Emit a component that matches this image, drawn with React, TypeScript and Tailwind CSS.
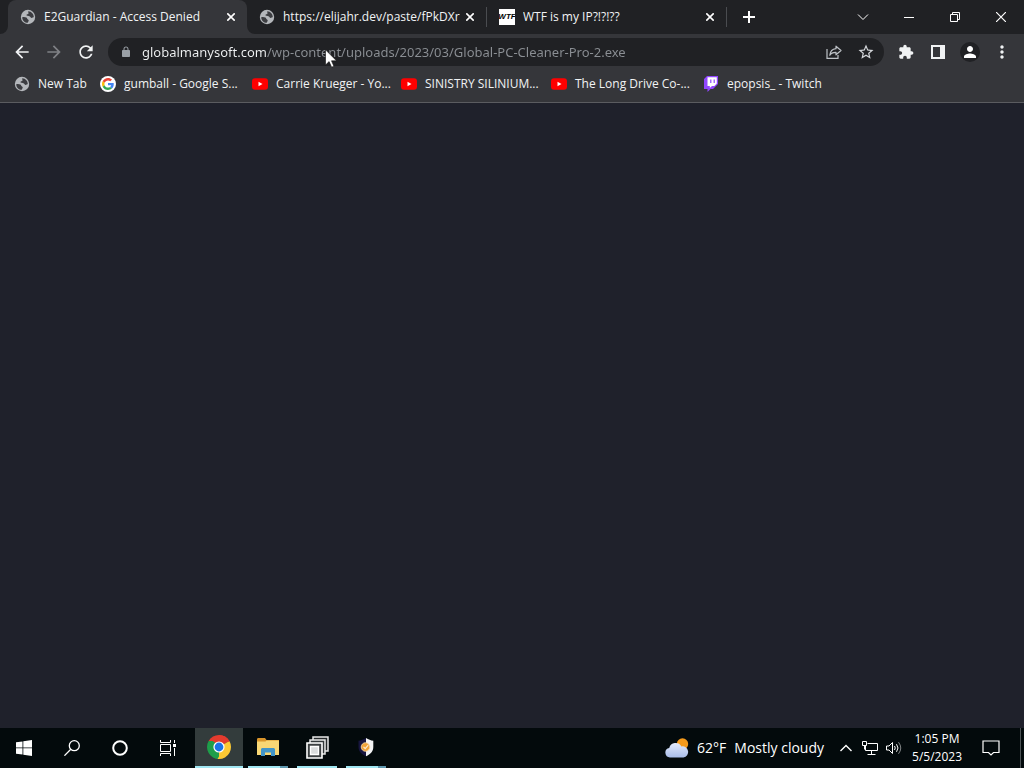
import React from "react";

type IconProps = { className?: string };

const PATHS = {
  back: "M20 11H7.83l5.59-5.59L12 4l-8 8 8 8 1.41-1.41L7.83 13H20v-2z",
  forward: "M12 4l-1.41 1.41L16.17 11H4v2h12.17l-5.58 5.59L12 20l8-8z",
  reload:
    "M17.65 6.35C16.2 4.9 14.21 4 12 4c-4.42 0-7.99 3.58-7.99 8s3.57 8 7.99 8c3.73 0 6.84-2.55 7.73-6h-2.08c-.82 2.33-3.04 4-5.65 4-3.31 0-6-2.69-6-6s2.69-6 6-6c1.66 0 3.14.69 4.22 1.78L13 11h7V4l-2.35 2.35z",
  lock: "M18 8h-1V6c0-2.76-2.24-5-5-5S7 3.24 7 6v2H6c-1.1 0-2 .9-2 2v10c0 1.1.9 2 2 2h12c1.1 0 2-.9 2-2V10c0-1.1-.9-2-2-2zM9 6c0-1.66 1.34-3 3-3s3 1.34 3 3v2H9V6z",
  star: "M22 9.24l-7.19-.62L12 2 9.19 8.63 2 9.24l5.46 4.73L5.82 21 12 17.27 18.18 21l-1.63-7.03L22 9.24zM12 15.4l-3.76 2.27 1-4.28-3.32-2.88 4.38-.38L12 6.1l1.71 4.04 4.38.38-3.32 2.88 1 4.28L12 15.4z",
  puzzle:
    "M20.5 11H19V7c0-1.1-.9-2-2-2h-4V3.5C13 2.12 11.88 1 10.5 1S8 2.12 8 3.5V5H4c-1.1 0-1.99.9-1.99 2v3.8H3.5c1.49 0 2.7 1.21 2.7 2.7s-1.21 2.7-2.7 2.7H2V20c0 1.1.9 2 2 2h3.8v-1.5c0-1.49 1.21-2.7 2.7-2.7 1.49 0 2.7 1.21 2.7 2.7V22H17c1.1 0 2-.9 2-2v-4h1.5c1.38 0 2.5-1.12 2.5-2.5S21.88 11 20.5 11z",
  person:
    "M12 12c2.21 0 4-1.79 4-4s-1.79-4-4-4-4 1.79-4 4 1.79 4 4 4zm0 2c-2.67 0-8 1.34-8 4v2h16v-2c0-2.66-5.33-4-8-4z",
  dots: "M12 8c1.1 0 2-.9 2-2s-.9-2-2-2-2 .9-2 2 .9 2 2 2zm0 2c-1.1 0-2 .9-2 2s.9 2 2 2 2-.9 2-2-.9-2-2-2zm0 6c-1.1 0-2 .9-2 2s.9 2 2 2 2-.9 2-2-.9-2-2-2z",
};

function Solid({ d, className = "size-5" }: IconProps & { d: string }) {
  return (
    <svg viewBox="0 0 24 24" fill="currentColor" className={`shrink-0 ${className}`} aria-hidden="true">
      <path d={d} />
    </svg>
  );
}

function GlobeIcon() {
  return (
    <svg viewBox="0 0 16 16" className="size-4 shrink-0" aria-hidden="true">
      <circle cx="8" cy="8" r="7.2" fill="#b4b7bb" />
      <path
        d="M2.2 8.2c1.6-.3 3.2-.2 4.2.4 1.1.7.4 1.5 1.6 1.9 1 .4.9 1.5.2 2.200l-.5 1.100C4.700 13.700 2.300 11.400 2.200 8.200zM8.300 2.200c-.5 1.200.6 1.400.2 2.300-.4.9-2 .5-2 1.500 0 1.200 2 .9 3 1.200 1.200.3 1 1.700 2.200 1.700.9 0 1.300-.7 2.100-.6.1-3.300-2.200-5.800-5.500-6.100z"
        fill="#3c3d41"
      />
    </svg>
  );
}

function GoogleIcon() {
  return (
    <svg viewBox="0 0 16 16" className="size-4 shrink-0" aria-hidden="true">
      <circle cx="8" cy="8" r="8" fill="#fff" />
      <g transform="translate(2 2) scale(.25)">
        <path fill="#EA4335" d="M24 9.500c3.540 0 6.710 1.220 9.210 3.600l6.850-6.850C35.900 2.380 30.470 0 24 0 14.620 0 6.510 5.380 2.560 13.220l7.980 6.190C12.430 13.720 17.740 9.500 24 9.500z" />
        <path fill="#4285F4" d="M46.980 24.550c0-1.570-.15-3.090-.38-4.550H24v9.020h12.940c-.58 2.960-2.260 5.480-4.780 7.180l7.730 6c4.510-4.180 7.090-10.360 7.090-17.650z" />
        <path fill="#FBBC05" d="M10.530 28.590c-.48-1.450-.76-2.990-.76-4.590s.27-3.140.76-4.590l-7.980-6.190C.92 16.460 0 20.120 0 24c0 3.880.92 7.540 2.560 10.780l7.970-6.190z" />
        <path fill="#34A853" d="M24 48c6.480 0 11.930-2.130 15.890-5.810l-7.730-6c-2.150 1.450-4.920 2.300-8.160 2.300-6.260 0-11.570-4.220-13.470-9.910l-7.980 6.190C6.510 42.620 14.620 48 24 48z" />
      </g>
    </svg>
  );
}

function YouTubeIcon() {
  return (
    <svg viewBox="0 0 16 16" className="size-4 shrink-0" aria-hidden="true">
      <rect y="2.300" width="16" height="11.400" rx="3" fill="#f00" />
      <path d="M6.500 5.700v4.600l4-2.300z" fill="#fff" />
    </svg>
  );
}

function TwitchIcon() {
  return (
    <svg viewBox="0 0 16 16" className="size-4 shrink-0" aria-hidden="true">
      <path d="M4 0 1 3v10h3.500v3l3-3H10l5-5V0z" fill="#9146ff" />
      <path d="M4.500 1.200h9.300v6.300l-2.400 2.400H9l-2.200 2.200V9.900H4.500z" fill="#fff" />
      <path d="M7.200 3.500h1.200v3.600H7.200zM10.600 3.500h1.200v3.600h-1.200z" fill="#9146ff" />
    </svg>
  );
}

function WtfIcon() {
  return (
    <span
      aria-hidden="true"
      className="flex size-4 shrink-0 items-center justify-center overflow-hidden bg-white font-['Liberation_Sans',sans-serif] text-[8px] leading-none font-bold text-black italic"
    >
      WTF
    </span>
  );
}

function CloseIcon() {
  return (
    <svg viewBox="0 0 8 8" className="size-2 shrink-0" stroke="#fff" strokeWidth="1.600" aria-hidden="true">
      <path d="M.3.3l7.400 7.400M7.700.3.3 7.700" />
    </svg>
  );
}

type TabProps = { icon: React.ReactNode; title: string; active?: boolean };

function Tab({ icon, title, active = false }: TabProps) {
  return (
    <div
      className={
        active
          ? "relative flex h-full w-[239px] items-center rounded-t-lg bg-[#35363a] px-3"
          : "flex h-full w-[239px] items-center px-3"
      }
    >
      {active && (
        <>
          <svg viewBox="0 0 8 8" className="absolute bottom-0 -left-2 size-2" aria-hidden="true">
            <path d="M8 0v8H0a8 8 0 0 0 8-8z" fill="#35363a" />
          </svg>
          <svg viewBox="0 0 8 8" className="absolute -right-2 bottom-0 size-2" aria-hidden="true">
            <path d="M0 0v8h8a8 8 0 0 1-8-8z" fill="#35363a" />
          </svg>
        </>
      )}
      <button role="tab" aria-selected={active} className="flex min-w-0 flex-1 items-center gap-2 text-left">
        {icon}
        <span className="truncate">{title}</span>
      </button>
      <button aria-label={`Close ${title}`} className="flex h-4 items-center">
        <CloseIcon />
      </button>
    </div>
  );
}

function TabStrip() {
  return (
    <header className="flex h-[34px] items-center bg-[#202124] pl-2 text-xs text-[#f1f3f4]">
      <div role="tablist" className="flex h-full items-center">
        <Tab active icon={<GlobeIcon />} title="E2Guardian - Access Denied" />
        <Tab icon={<GlobeIcon />} title="https://elijahr.dev/paste/fPkDXr" />
        <div className="h-5 w-px bg-[#4a4c50]" />
        <Tab icon={<WtfIcon />} title="WTF is my IP?!?!??" />
        <div className="h-5 w-px bg-[#4a4c50]" />
      </div>
      <button aria-label="New tab" className="flex h-full w-11 items-center justify-center">
        <svg viewBox="0 0 12 12" className="size-3" stroke="#fff" strokeWidth="2" aria-hidden="true">
          <path d="M6 0v12M0 6h12" />
        </svg>
      </button>
      <div className="ml-auto flex h-7 text-white">
        <button aria-label="Search tabs" className="flex w-[46px] items-center justify-center">
          <svg viewBox="0 0 12 12" className="size-3" fill="none" stroke="currentColor" aria-hidden="true">
            <path d="M1 3.500l5 5 5-5" />
          </svg>
        </button>
        <button aria-label="Minimize" className="flex w-[46px] items-center justify-center">
          <svg viewBox="0 0 10 10" className="size-2.5" fill="none" stroke="currentColor" aria-hidden="true">
            <path d="M0 5.500h10" />
          </svg>
        </button>
        <button aria-label="Restore" className="flex w-[46px] items-center justify-center">
          <svg viewBox="0 0 10 10" className="size-2.5" fill="none" stroke="currentColor" aria-hidden="true">
            <path d="M.5 2.500h7v7h-7zM2.500 2.500v-2h7v7h-2" />
          </svg>
        </button>
        <button aria-label="Close window" className="flex w-[46px] items-center justify-center">
          <svg viewBox="0 0 10 10" className="size-2.5" fill="none" stroke="currentColor" strokeWidth="1.200" aria-hidden="true">
            <path d="M0 0l10 10M10 0 0 10" />
          </svg>
        </button>
      </div>
    </header>
  );
}

function Toolbar() {
  const button = "flex size-8 shrink-0 items-center justify-center";
  return (
    <div className="flex h-9 items-center bg-[#35363a] px-1.5 text-[#f1f3f4]">
      <button aria-label="Back" className={button}>
        <Solid d={PATHS.back} />
      </button>
      <button aria-label="Forward" disabled className={`${button} text-[#7f8185]`}>
        <Solid d={PATHS.forward} />
      </button>
      <button aria-label="Reload" className={button}>
        <Solid d={PATHS.reload} />
      </button>
      <div className="mr-1.5 ml-1.5 flex h-7 min-w-0 flex-1 items-center rounded-full bg-[#202124] pr-0.5 pl-3 text-[#9aa0a6]">
        <Solid d={PATHS.lock} className="size-3" />
        <input
          aria-label="Address and search bar"
          defaultValue="globalmanysoft.com/wp-content/uploads/2023/03/Global-PC-Cleaner-Pro-2.exe"
          className="ml-2.5 h-full min-w-0 flex-1 bg-[linear-gradient(to_right,#f1f3f4_125px,#8b8f94_125px)] bg-clip-text font-['Noto_Sans',sans-serif] text-[13px] text-transparent outline-none"
        />
        <button aria-label="Share this page" className={button}>
          <svg viewBox="0 0 16 16" className="size-4" fill="none" stroke="#bdc1c6" strokeWidth="1.200" aria-hidden="true">
            <path d="M1 5v9.400h11V11" />
            <path d="M10 2.200l5 4.300-5 4.300V8.300C7 8.200 5 9 3.800 11.300 4.200 7.500 6.300 5 10 4.700z" strokeLinejoin="round" />
          </svg>
        </button>
        <button aria-label="Bookmark this tab" className={`${button} text-[#d5d8dc]`}>
          <Solid d={PATHS.star} className="size-[18px]" />
        </button>
      </div>
      <button aria-label="Extensions" className={button}>
        <Solid d={PATHS.puzzle} className="size-4" />
      </button>
      <button aria-label="Side panel" className={button}>
        <svg viewBox="0 0 14 14" className="size-3.5" aria-hidden="true">
          <path fill="currentColor" fillRule="evenodd" d="M0 0h14v14H0zM2 2v10h7V2z" />
        </svg>
      </button>
      <button aria-label="Profile" className={button}>
        <span className="flex size-5 items-center justify-center rounded-full bg-[#202124] text-white">
          <Solid d={PATHS.person} className="size-[18px]" />
        </span>
      </button>
      <button aria-label="Menu" className={button}>
        <Solid d={PATHS.dots} />
      </button>
    </div>
  );
}

const BOOKMARKS = [
  { label: "New Tab", icon: <GlobeIcon />, width: "w-[86px]" },
  { label: "gumball - Google S...", icon: <GoogleIcon />, width: "w-[152px]" },
  { label: "Carrie Krueger - Yo...", icon: <YouTubeIcon />, width: "w-[149px]" },
  { label: "SINISTRY SILINIUM...", icon: <YouTubeIcon />, width: "w-[150px]" },
  { label: "The Long Drive Co-...", icon: <YouTubeIcon />, width: "w-[152px]" },
  { label: "epopsis_ - Twitch", icon: <TwitchIcon />, width: "w-[130px]" },
];

function BookmarkBar() {
  return (
    <nav
      aria-label="Bookmarks"
      className="flex h-[33px] items-start border-b border-[#5b5c60] bg-[#35363a] pt-1 pl-3.5 text-xs text-[#f1f3f4]"
    >
      {BOOKMARKS.map((b) => (
        <a key={b.label} href="#" className={`flex h-5 shrink-0 items-center gap-2 whitespace-nowrap ${b.width}`}>
          {b.icon}
          {b.label}
        </a>
      ))}
    </nav>
  );
}

function ChromeIcon() {
  return (
    <svg viewBox="0 0 24 24" className="size-6" aria-hidden="true">
      <path d="M12 12 1.610 6A12 12 0 0 1 22.390 6z" fill="#e33b2e" />
      <path d="M12 12 22.390 6A12 12 0 0 1 12 24z" fill="#fcc934" />
      <path d="M12 12v12A12 12 0 0 1 1.610 6z" fill="#1e9e4a" />
      <path d="M12 6.500h10.700L22.390 6A12 12 0 0 0 12 0z" fill="#e33b2e" />
      <path d="M7.200 14.800 1.610 6l4 0 4.400 3z" fill="#1e9e4a" />
      <path d="M16.800 14.700 12 24l-1.500-.1 3.500-6z" fill="#fcc934" />
      <circle cx="12" cy="12" r="5.600" fill="#fff" />
      <circle cx="12" cy="12" r="4.400" fill="#1a73e8" />
    </svg>
  );
}

function FolderIcon() {
  return (
    <svg viewBox="0 0 22 18" className="h-[18px] w-[22px]" aria-hidden="true">
      <path d="M0 1.500C0 .7.500 0 1.300 0H8l1.500 2H22v4H0z" fill="#d9952b" />
      <path d="M0 3.500h8.500l1-1H22V17H0z" fill="#f8d775" />
      <path d="M4 18v-6.500c0-.8.7-1.500 1.500-1.500h11c.8 0 1.500.7 1.500 1.500V18h-4v-3.500H8V18z" fill="#4295c8" />
    </svg>
  );
}

function WindowsStackIcon() {
  return (
    <svg viewBox="0 0 23 23" className="size-[23px]" aria-hidden="true">
      <path d="M7 1h15v14H7z" fill="#24282a" stroke="#e8e8e8" strokeWidth="1.500" />
      <path d="M4 4h15v14H4z" fill="#33383a" stroke="#e8e8e8" strokeWidth="1.500" />
      <path d="M1 7h15v15H1z" fill="#3c4042" stroke="#fff" strokeWidth="1.600" />
      <path d="M4.500 10.500h8v8h-8z" fill="#dadcdd" stroke="#fff" strokeWidth="1.400" />
    </svg>
  );
}

function ShieldIcon() {
  return (
    <svg viewBox="0 0 18 20" className="h-5 w-[18px]" aria-hidden="true">
      <path d="M9 1C6.500 2.500 4 3.500 1.500 3.700V10c0 4.300 2.800 7.300 7.500 9.300z" fill="#17153f" />
      <path d="M9 1c2.500 1.500 4.800 2.500 7.300 2.700V10c0 4.300-2.700 7.300-7.300 9.300z" fill="#f4f4f6" />
      <circle cx="8.500" cy="10" r="4.300" fill="#f0a339" stroke="#f8dcb4" strokeWidth=".8" />
      <path d="M6.500 9.800l1.700 1.800 3-3.400" fill="none" stroke="#fbe9d0" strokeWidth="1.200" />
    </svg>
  );
}

function WeatherIcon() {
  return (
    <svg viewBox="0 0 24 20" className="h-5 w-6" aria-hidden="true">
      <defs>
        <linearGradient id="cloud" x1="0" y1="0" x2="0" y2="1">
          <stop offset="0" stopColor="#e3eafb" />
          <stop offset="1" stopColor="#a9bdea" />
        </linearGradient>
      </defs>
      <circle cx="17.500" cy="6" r="5.700" fill="#f59a1b" />
      <path d="M5 19.500a4.800 4.800 0 0 1-.8-9.500 6.600 6.600 0 0 1 12.200-1.500A5.600 5.600 0 1 1 18.500 19.500z" fill="url(#cloud)" />
    </svg>
  );
}

type TaskProps = { label: string; underline: string; active?: boolean; tail?: boolean; children: React.ReactNode };

function TaskApp({ label, underline, active = false, tail = false, children }: TaskProps) {
  return (
    <button
      aria-label={label}
      className={active ? "flex h-full w-12 flex-col items-center bg-[#333c3c]" : "flex h-full w-12 flex-col items-center"}
    >
      <span className="flex flex-1 items-center">{children}</span>
      <span className={`flex h-0.5 justify-end bg-[#a0e6f2] ${underline}`}>
        {tail && <span className="h-full w-2 bg-[#5f98b0]" />}
      </span>
    </button>
  );
}

function Taskbar() {
  const slot = "flex h-full w-12 items-center justify-center";
  return (
    <footer className="flex h-10 shrink-0 items-center bg-[#030a0c] text-white">
      <button aria-label="Start" className={slot}>
        <svg viewBox="0 0 16 16" className="size-4" fill="currentColor" aria-hidden="true">
          <path d="M0 2.300l6.500-.9v6.100H0zM7.300 1.300 16 0v7.500H7.300zM0 8.300h6.500v6.300L0 13.700zM7.300 8.300H16V16l-8.700-1.200z" />
        </svg>
      </button>
      <button aria-label="Search" className={slot}>
        <svg viewBox="0 0 16 16" className="size-4" fill="none" stroke="currentColor" strokeWidth="1.300" aria-hidden="true">
          <circle cx="10.300" cy="5.700" r="5" />
          <path d="M6.800 9.300.4 15.700" />
        </svg>
      </button>
      <button aria-label="Cortana" className={slot}>
        <svg viewBox="0 0 16 16" className="size-4" fill="none" stroke="currentColor" strokeWidth="2" aria-hidden="true">
          <circle cx="8" cy="8" r="6.800" />
        </svg>
      </button>
      <button aria-label="Task view" className={slot}>
        <svg viewBox="0 0 16 16" className="size-4" fill="none" stroke="currentColor" aria-hidden="true">
          <path d="M.5 0v2.500h10V0M.5 16v-2.500h10V16M.5 4.500h10v7H.5zM14.500 0v3M14.500 8v8" />
          <path d="M13 4h3v3h-3z" fill="currentColor" stroke="none" />
        </svg>
      </button>
      <div className="ml-[3px] flex h-full gap-px">
        <TaskApp label="Google Chrome" underline="w-12" active>
          <ChromeIcon />
        </TaskApp>
        <TaskApp label="File Explorer" underline="w-10" tail>
          <FolderIcon />
        </TaskApp>
        <TaskApp label="Virtual machine" underline="w-10">
          <WindowsStackIcon />
        </TaskApp>
        <TaskApp label="Security" underline="w-10" tail>
          <ShieldIcon />
        </TaskApp>
      </div>
      <div className="ml-auto flex h-full items-center">
        <button className="flex items-center gap-2 text-sm whitespace-nowrap">
          <WeatherIcon />
          <span>62°F</span>
          <span>Mostly cloudy</span>
        </button>
        <button aria-label="Show hidden icons" className="ml-4 flex h-full items-center">
          <svg viewBox="0 0 12 8" className="h-2 w-3" fill="none" stroke="currentColor" strokeWidth="1.400" aria-hidden="true">
            <path d="M.5 7 6 1.500 11.500 7" />
          </svg>
        </button>
        <button aria-label="Network" className="ml-2.5 flex h-full items-center">
          <svg viewBox="0 0 16 14" className="h-3.5 w-4" fill="none" stroke="currentColor" aria-hidden="true">
            <path d="M5.500 2.500h10v7h-12V5M9.500 9.500v4M5.500 13.500h8M.5.500h4v4h-4zM2.500 4.500v4" />
          </svg>
        </button>
        <button aria-label="Volume" className="ml-2 flex h-full items-center">
          <svg viewBox="0 0 16 14" className="h-3.5 w-4" fill="none" stroke="currentColor" aria-hidden="true">
            <path d="M.5 5h2.500L6.500 1.500v11L3 9H.5zM8.500 5q1.500 2 0 4M10.500 3.200q3 3.800 0 7.600" />
            <path d="M12.500 1.200q4.500 5.800 0 11.600" opacity=".5" />
          </svg>
        </button>
        <button className="ml-2.5 text-center text-xs leading-[18px] whitespace-nowrap">
          <time dateTime="2023-05-05T13:05">
            1:05 PM
            <br />
            5/5/2023
          </time>
        </button>
        <button aria-label="Notifications" className="ml-5 flex h-full items-center">
          <svg viewBox="0 0 18 16" className="h-4 w-[18px]" fill="none" stroke="currentColor" strokeWidth="1.200" aria-hidden="true">
            <path d="M1 1h16v11.500h-5.500L9 15l-2.500-2.500H1z" />
          </svg>
        </button>
        <button aria-label="Show desktop" className="ml-5 h-full w-1 border-l border-[#4c5355]" />
      </div>
    </footer>
  );
}

export default function App() {
  return (
    <div className="relative flex min-h-screen flex-col bg-[#1f212b] font-['Open_Sans','Noto_Sans',sans-serif]">
      <TabStrip />
      <Toolbar />
      <BookmarkBar />
      <main className="flex-1" />
      <Taskbar />
      <svg viewBox="0 0 12 19" className="pointer-events-none absolute top-[49px] left-[325px] h-[19px] w-3" aria-hidden="true">
        <path d="M.5.800v15.200l3.600-3.400 2.500 5.600 2.300-1-2.400-5.400h5z" fill="#fff" stroke="#111" strokeWidth=".6" />
      </svg>
    </div>
  );
}
